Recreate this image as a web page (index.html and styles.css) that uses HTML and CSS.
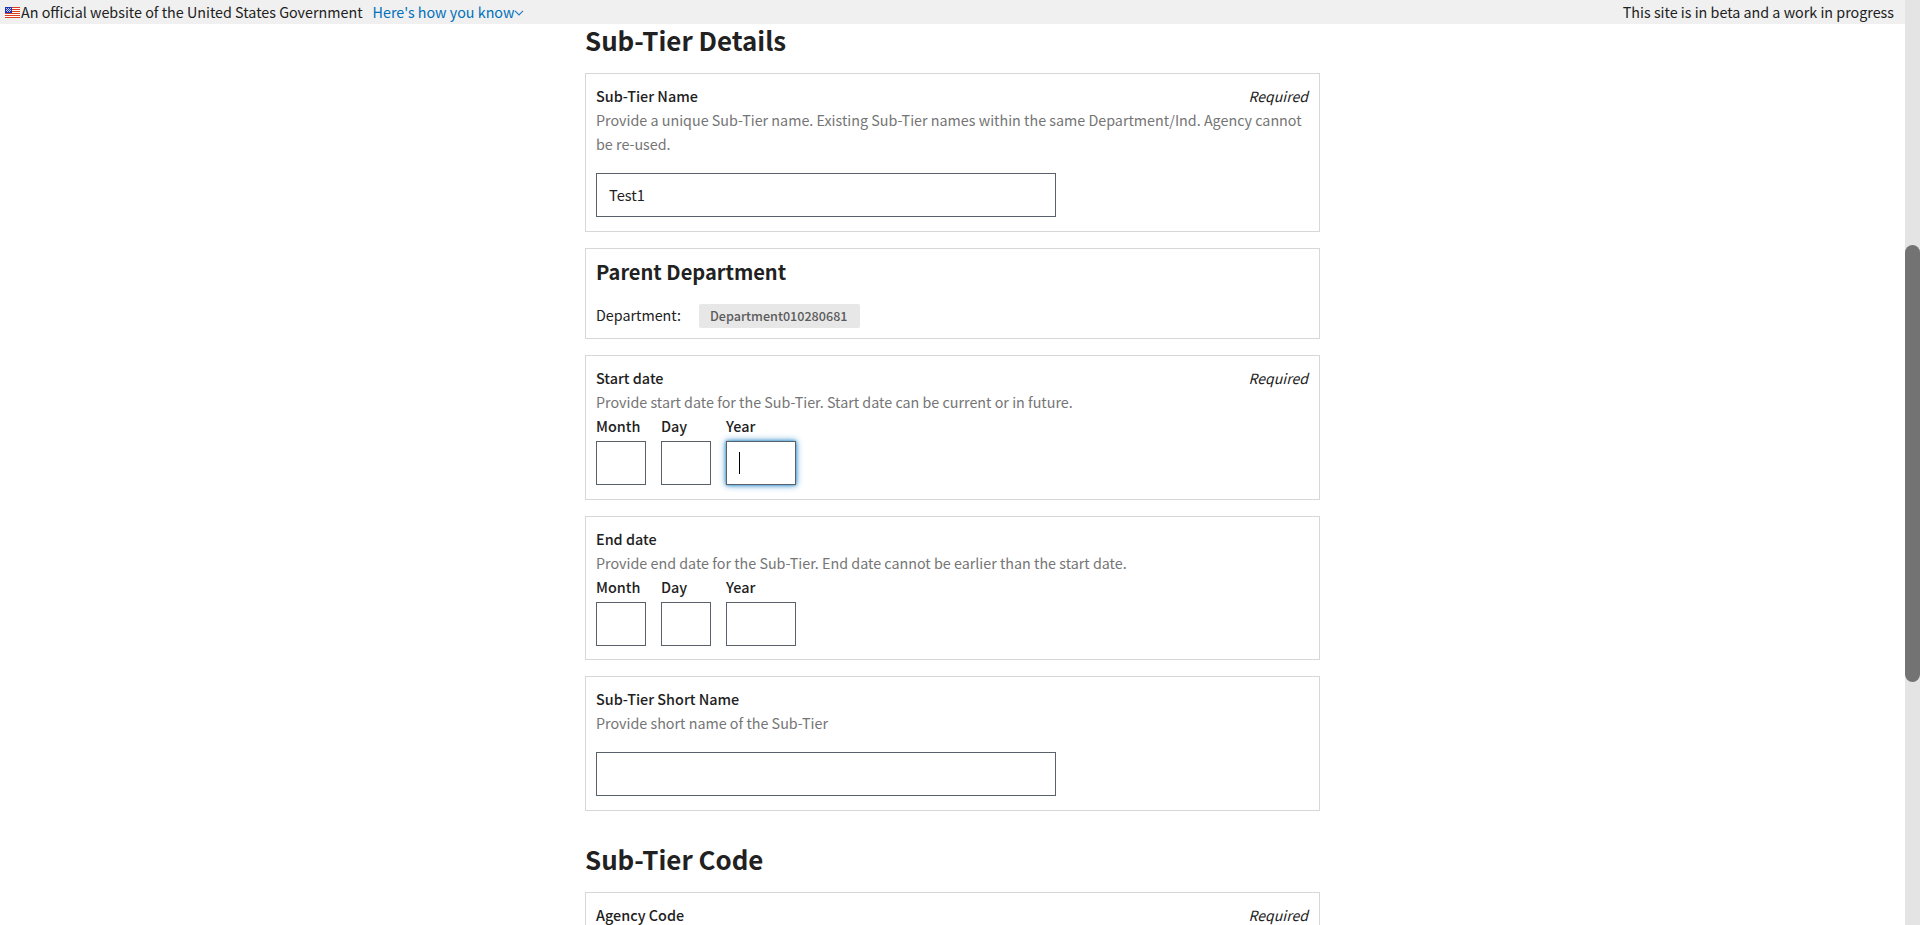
FILE: index.html
```html
<!DOCTYPE html>
<html lang="en">
<head>
<meta charset="utf-8">
<title>Sub-Tier Details</title>
<link rel="stylesheet" href="styles.css">
</head>
<body>
<div class="page">
  <header class="banner">
    <svg class="flag" width="15" height="11" viewBox="0 0 15 11" shape-rendering="crispEdges">
      <rect width="15" height="11" fill="#fff"/>
      <path d="M0 .5h15M0 2.5h15M0 4.5h15M0 6.5h15M0 8.5h15M0 10.5h15" stroke="#dd3c22"/>
      <rect width="7" height="6" fill="#1f35b4"/>
      <path d="M1 1.5h1m1 0h1m1 0h1M2 2.5h1m1 0h1M1 3.5h1m1 0h1m1 0h1M2 4.5h1m1 0h1" stroke="#c9d0f2"/>
    </svg>
    <span class="banner-text">An official website of the United States Government</span>
    <a class="banner-link">Here's how you know</a>
    <svg class="chevron" width="10" height="6" viewBox="0 0 10 6"><path d="M1 .8 5 4.8 9 .8" fill="none" stroke="#2a7abf" stroke-width="1.2"/></svg>
    <span class="beta">This site is in beta and a work in progress</span>
  </header>

  <main class="form">
    <h2 class="title">Sub-Tier Details</h2>
    <div class="cards">
      <section class="card">
        <div class="row"><label class="label">Sub-Tier Name</label><em class="required">Required</em></div>
        <p class="hint">Provide a unique Sub-Tier name. Existing Sub-Tier names within the same Department/Ind. Agency cannot be re-used.</p>
        <div class="input wide">Test1</div>
      </section>

      <section class="card parent">
        <h3 class="subtitle">Parent Department</h3>
        <div class="department"><span class="name">Department:</span><span class="tag">Department010280681</span></div>
      </section>

      <section class="card">
        <div class="row"><span class="label">Start date</span><em class="required">Required</em></div>
        <p class="hint">Provide start date for the Sub-Tier. Start date can be current or in future.</p>
        <div class="date">
          <div class="field"><label class="label">Month</label><div class="input"></div></div>
          <div class="field"><label class="label">Day</label><div class="input"></div></div>
          <div class="field year"><label class="label">Year</label><div class="input focused"><span class="caret"></span></div></div>
        </div>
      </section>

      <section class="card end">
        <div class="row"><span class="label">End date</span></div>
        <p class="hint">Provide end date for the Sub-Tier. End date cannot be earlier than the start date.</p>
        <div class="date">
          <div class="field"><label class="label">Month</label><div class="input"></div></div>
          <div class="field"><label class="label">Day</label><div class="input"></div></div>
          <div class="field year"><label class="label">Year</label><div class="input"></div></div>
        </div>
      </section>

      <section class="card">
        <div class="row"><label class="label">Sub-Tier Short Name</label></div>
        <p class="hint">Provide short name of the Sub-Tier</p>
        <div class="input wide"></div>
      </section>
    </div>

    <h2 class="title next">Sub-Tier Code</h2>
    <section class="card">
      <div class="row"><label class="label">Agency Code</label><em class="required">Required</em></div>
      <div class="input wide"></div>
    </section>
  </main>
</div>
<div class="scrollbar"><div class="thumb"></div></div>
</body>
</html>
```

FILE: styles.css
```css
* { box-sizing: border-box; margin: 0; padding: 0; }

body {
  display: flex;
  height: 925px;
  overflow: hidden;
  background: #fff;
  color: #212121;
  font-family: "Noto Sans CJK SC", "Noto Sans", sans-serif;
  font-size: 14.32px;
  line-height: 24px;
}

.page { flex: 1; height: 925px; overflow: hidden; }

.banner {
  display: flex;
  align-items: center;
  height: 24px;
  padding: 0 11px 0 5px;
  background: #f0f0f0;
  white-space: nowrap;
}
.flag { margin: 1px 1px 0 0; }
.banner-link { margin-left: 10px; color: #0071bc; }
.chevron { margin-top: 1px; }
.beta { margin-left: auto; }

.form { width: 735px; margin: 1px 0 0 585px; }

.title { margin-bottom: 18px; font-size: 25.87px; font-weight: 700; line-height: 30px; }
.title.next { margin-top: 33px; }

.cards { display: flex; flex-direction: column; gap: 16px; }

.card { padding: 10px 10px 14px; border: 1px solid #d6d7d9; }
.parent { padding-bottom: 10px; }
.end { padding-bottom: 13px; }

.row { display: flex; justify-content: space-between; }
.label { display: block; font-size: 14.4px; font-weight: 500; }
.required { padding-right: 1px; font-size: 14.05px; }
.hint { color: #757575; }

.input { display: flex; align-items: center; height: 44px; padding: 0 12px; border: 1px solid #5b616b; font-size: 14.6px; }
.wide { width: 460px; margin-top: 17px; }

.date { display: flex; gap: 15px; }
.field { width: 50px; }
.field.year { width: 70px; }
.date .label { margin-bottom: 3px; }
.focused { box-shadow: 0 0 3px #3e94cf, 0 0 7px #3e94cf; }
.caret { width: 1px; height: 22px; background: #000; }

.subtitle { margin-bottom: 19px; font-size: 20.05px; font-weight: 700; line-height: 26px; }
.department { display: flex; height: 24px; }
.name { width: 103px; line-height: 22px; }
.tag {
  width: 161px;
  padding: 0 11px;
  border-radius: 2px;
  background: #e7e7e7;
  color: #5b5b5b;
  font-size: 12.6px;
  font-weight: 500;
  white-space: nowrap;
}

.scrollbar { width: 15px; height: 925px; padding-top: 245px; background: #e4e4e4; }
.thumb { height: 437px; border-radius: 8px; background: #737373; }
```
